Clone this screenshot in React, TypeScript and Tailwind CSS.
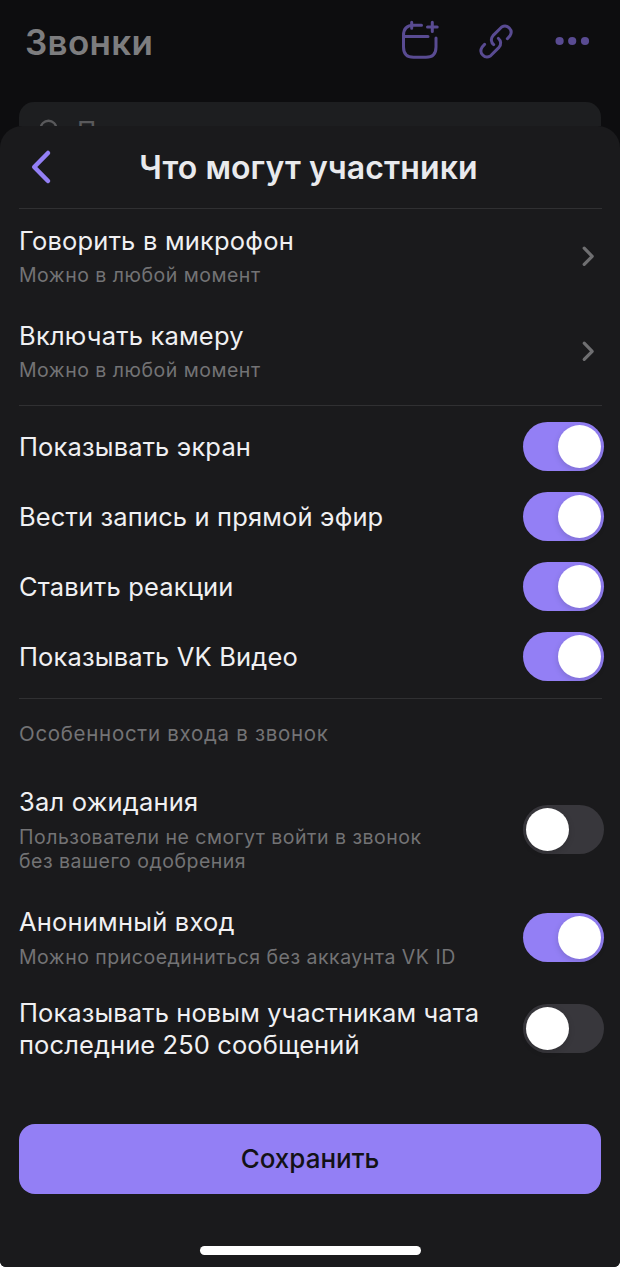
import { useState } from 'react'

const CalendarPlus = () => (
  <svg width="42" height="44" viewBox="400 19 42 44" fill="none" stroke="currentColor" strokeWidth="3" strokeLinecap="round" strokeLinejoin="round">
    <path d="M421.5 25.3H413.5Q403.5 25.3 403.5 35.5V47Q403.5 57.3 413.5 57.3H426Q436 57.3 436 47V38" />
    <path d="M411.7 22.3V28.3M403.5 36.5H428M432.3 22.3V31.6M427.5 26.9H437.2" />
  </svg>
)

const LinkIcon = () => (
  <svg width="42" height="44" viewBox="285 57 126 132" fill="none" stroke="currentColor" strokeWidth="9" strokeLinecap="round" strokeLinejoin="round">
    <path d="M382 116L390 107A18.5 18.5 0 0 0 365 81L339 107A18.5 18.5 0 0 0 341 134" />
    <path d="M314 133L306 142A18.5 18.5 0 0 0 331 168L357 142A18.5 18.5 0 0 0 355 115" />
  </svg>
)

const Dots = () => (
  <svg width="36" height="10" viewBox="0 0 36 10" fill="currentColor">
    <circle cx="5.6" cy="5" r="4.1" />
    <circle cx="18.2" cy="5" r="4.1" />
    <circle cx="31" cy="5" r="4.1" />
  </svg>
)

const ChevronRight = () => (
  <svg className="mr-[25px] shrink-0" width="14" height="24" viewBox="0 0 14 24" fill="none" stroke="#6f6f71" strokeWidth="3.2" strokeLinecap="round" strokeLinejoin="round">
    <path d="M3.2 3.2L11.2 11.3L3.2 19.4" />
  </svg>
)

const Toggle = ({ label, initial }: { label: string; initial: boolean }) => {
  const [on, setOn] = useState(initial)

  return (
    <button
      role="switch"
      aria-checked={on}
      aria-label={label}
      onClick={() => setOn(!on)}
      className={`mr-4 flex h-[49px] w-[81px] shrink-0 items-center rounded-full px-[3px] ${on ? 'justify-end bg-[#937ff5]' : 'justify-start bg-[#38373c]'}`}
    >
      <span className="size-[43px] rounded-full bg-white shadow-[0_2px_6px_rgba(0,0,0,0.15)]" />
    </button>
  )
}

const Divider = () => <div className="mr-[18px] h-px bg-[#303032]" />

const permissions = [
  { title: 'Говорить в микрофон', value: 'Можно в любой момент' },
  { title: 'Включать камеру', value: 'Можно в любой момент' },
]

const actions = ['Показывать экран', 'Вести запись и прямой эфир', 'Ставить реакции', 'Показывать VK Видео']

const App = () => {
  return (
    <div className="h-[1267px] w-[620px] bg-white font-['Inter',sans-serif]">
      <div className="flex h-full flex-col overflow-hidden rounded-b-[6px] bg-[#0d0d0f]">
        <header className="flex h-[102px] shrink-0 items-start justify-between pl-[25px] pr-[30px] text-[#594b92]">
          <h1 className="mt-[21px] text-[35px] font-semibold leading-[42px] tracking-[0.3px] text-[#7d7d7f]">Звонки</h1>
          <div className="flex h-[82px] items-center">
            <CalendarPlus />
            <div className="ml-[33px]"><LinkIcon /></div>
            <div className="ml-[37px]"><Dots /></div>
          </div>
        </header>

        <div className="mx-[19px] h-6 shrink-0 overflow-hidden rounded-t-[15px] bg-[#1d1e20]">
          <div className="flex items-start pl-5 pt-[17px] text-[#59595b]">
            <svg width="20" height="20" viewBox="0 0 20 20" fill="none" stroke="currentColor" strokeWidth="2.4">
              <circle cx="9.5" cy="9.5" r="7.8" />
            </svg>
            <span className="ml-[18px] mt-[-3px] text-[26px] leading-[30px]">П</span>
          </div>
        </div>

        <main className="flex flex-1 flex-col rounded-t-[22px] bg-[#1a1a1c] pl-[19px]">
          <div className="mr-[18px] flex h-[82px] shrink-0 items-center">
            <svg className="ml-[9px] shrink-0" width="26" height="38" viewBox="0 0 26 38" fill="none" stroke="#937ff5" strokeWidth="4.5" strokeLinecap="round" strokeLinejoin="round">
              <path d="M20 5L6.2 19L20 33" />
            </svg>
            <h2 className="mr-[39px] flex-1 pt-0.5 text-center text-[32px] font-semibold leading-10 tracking-[0.1px] text-[#e9eaed]">Что могут участники</h2>
          </div>
          <Divider />

          <section className="pb-[6px]">
            {permissions.map((item) => (
              <div key={item.title} className="flex h-[95px] items-center justify-between">
                <div>
                  <p className="text-[25.5px] leading-8 tracking-[0.2px] text-[#f0f0f2]">{item.title}</p>
                  <p className="mt-[6px] pb-px text-[19.5px] leading-6 tracking-[0.5px] text-[#737375]">{item.value}</p>
                </div>
                <ChevronRight />
              </div>
            ))}
          </section>
          <Divider />

          <section className="pb-[7px] pt-[5px]">
            {actions.map((title) => (
              <div key={title} className="flex h-[70px] items-center justify-between">
                <p className="pt-0.5 text-[25.5px] leading-8 tracking-[0.15px] text-[#f0f0f2]">{title}</p>
                <Toggle label={title} initial />
              </div>
            ))}
          </section>
          <Divider />

          <section className="flex flex-col pt-[23px]">
            <h3 className="mb-[40px] text-[20.5px] leading-6 tracking-[0.7px] text-[#737375]">Особенности входа в звонок</h3>

            <div className="mb-[33px] flex h-[87px] items-center justify-between">
              <div>
                <p className="text-[25.5px] leading-8 tracking-[0.2px] text-[#f0f0f2]">Зал ожидания</p>
                <p className="mt-[7px] text-[19.5px] leading-6 tracking-[0.5px] text-[#737375]">
                  Пользователи не смогут войти в звонок
                  <br />
                  без вашего одобрения
                </p>
              </div>
              <Toggle label="Зал ожидания" initial={false} />
            </div>

            <div className="mb-[27px] flex h-[63px] items-center justify-between">
              <div>
                <p className="text-[25.5px] leading-8 tracking-[0.2px] text-[#f0f0f2]">Анонимный вход</p>
                <p className="mt-[7px] text-[19.5px] leading-6 tracking-[0.5px] text-[#737375]">Можно присоединиться без аккаунта VK ID</p>
              </div>
              <Toggle label="Анонимный вход" initial />
            </div>

            <div className="flex h-[65px] items-center justify-between">
              <p className="text-[25.5px] leading-8 tracking-[0.1px] text-[#f0f0f2]">
                Показывать новым участникам чата
                <br />
                последние 250 сообщений
              </p>
              <Toggle label="Показывать последние сообщения" initial={false} />
            </div>
          </section>

          <button className="mr-[19px] mt-[63px] h-[70px] shrink-0 rounded-[16px] bg-[#937ff5] pb-0.5 text-[26px] font-medium text-[#131216]">
            Сохранить
          </button>
          <div className="ml-[181px] mt-[52px] h-[9px] w-[221px] shrink-0 rounded-full bg-white" />
        </main>
      </div>
    </div>
  )
}

export default App
